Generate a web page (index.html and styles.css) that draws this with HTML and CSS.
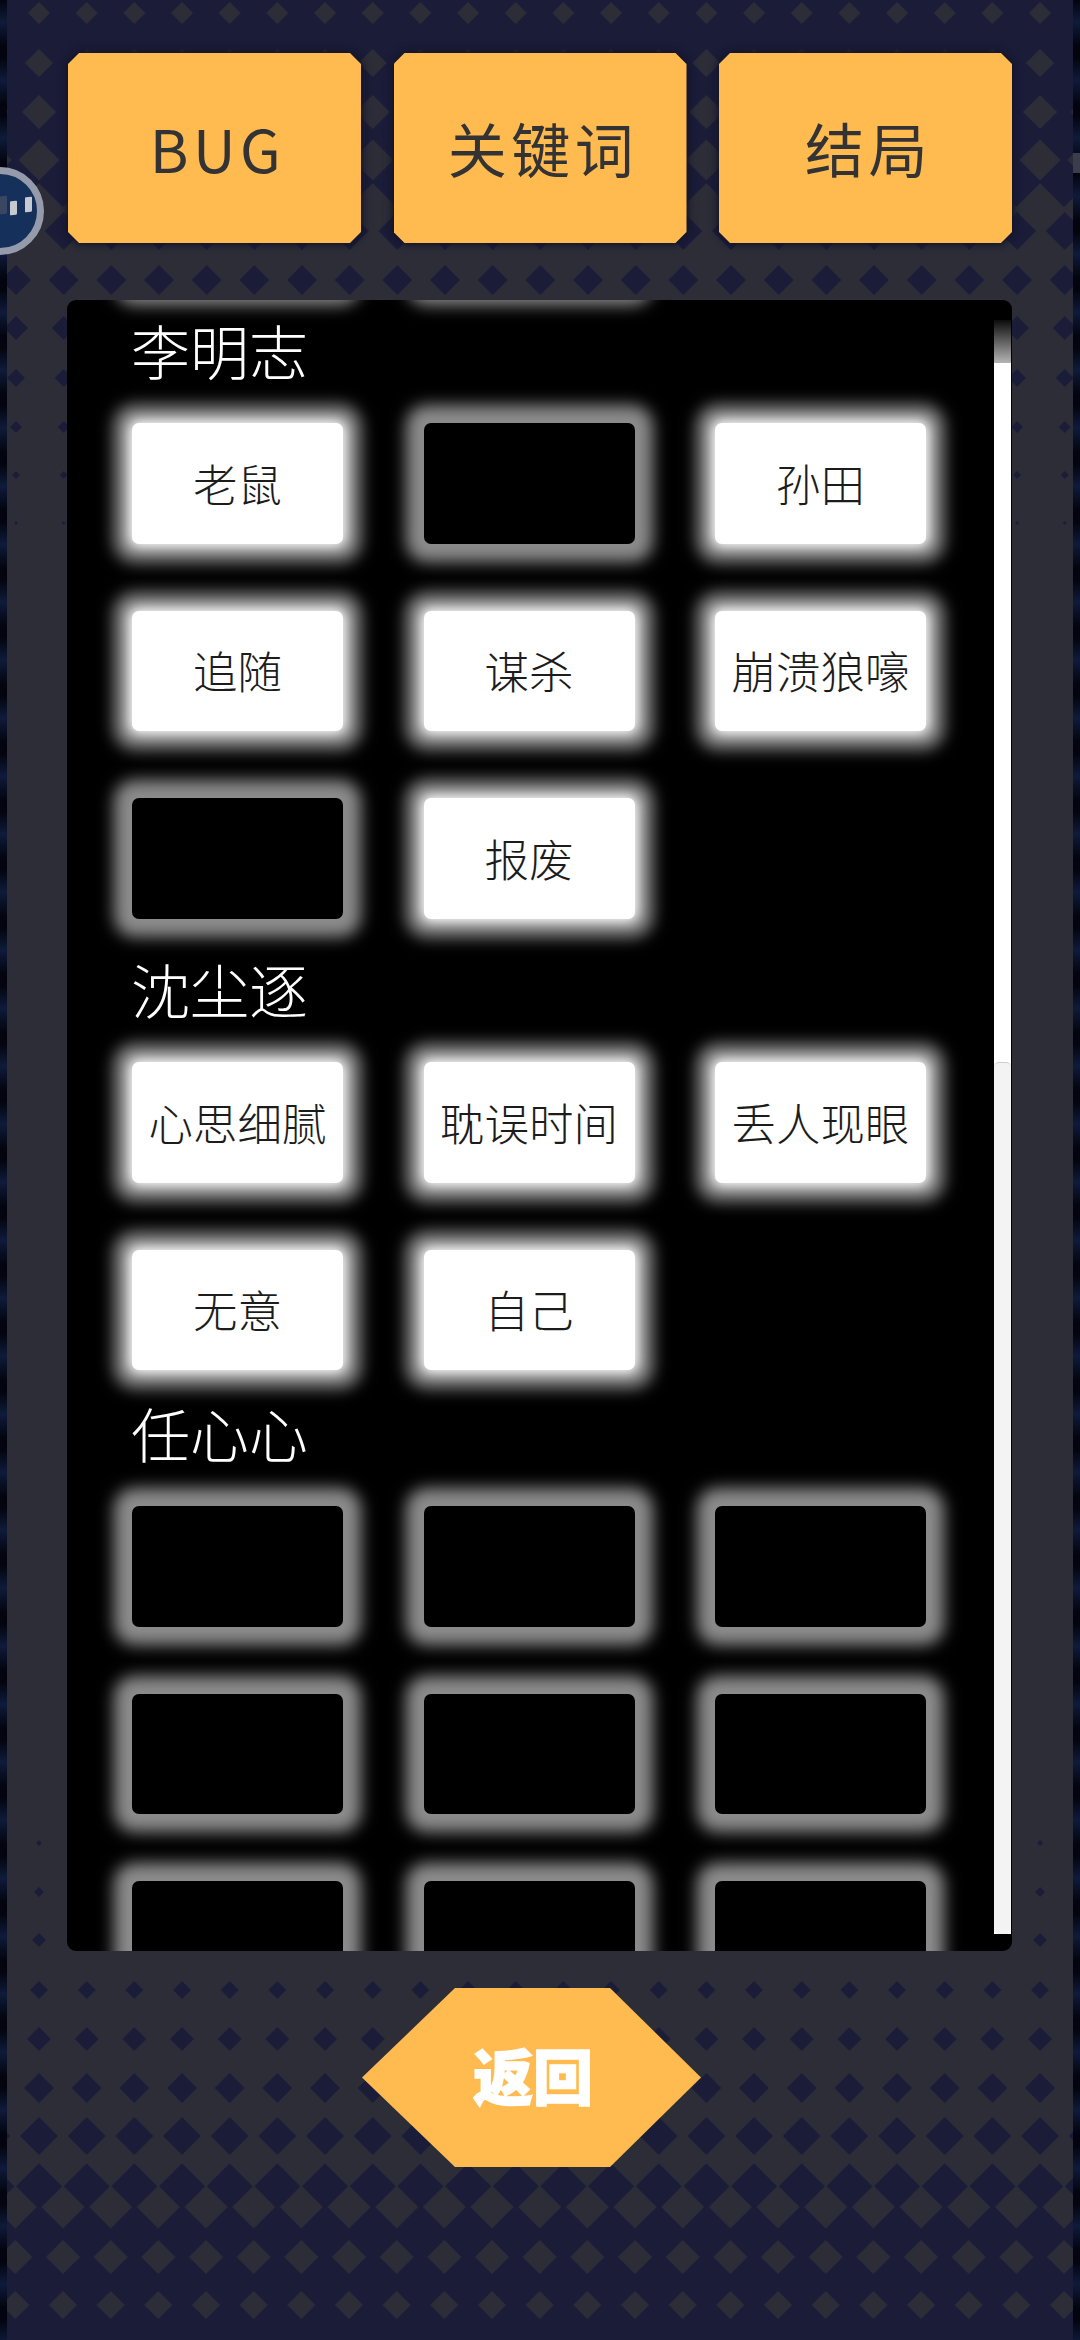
FILE: index.html

```html
<!DOCTYPE html>
<html>

<head>
<title>线索</title>
<meta charset="UTF-8">
<link rel="stylesheet" href="styles.css">
</head>

<body>
<div id="screen">

  <!-- diamond wallpaper, one pattern per row because the size changes row by row -->
  <svg id="wallpaper" width="1080" height="2340" viewBox="0 0 1080 2340">
    <defs>
      <pattern id="g1" patternUnits="userSpaceOnUse" width="47.67" height="60" x="15.17" y="-17"><path class="gray" d="M23.83 19l11 11-11 11-11-11z"/></pattern>
      <pattern id="g2" patternUnits="userSpaceOnUse" width="47.67" height="60" x="15.17" y="33"><path class="gray" d="M23.83 16l14 14-14 14-14-14z"/></pattern>
      <pattern id="g3" patternUnits="userSpaceOnUse" width="47.67" height="60" x="15.17" y="82"><path class="gray" d="M23.83 13l17 17-17 17-17-17z"/></pattern>
      <pattern id="g4" patternUnits="userSpaceOnUse" width="47.67" height="60" x="15.17" y="130"><path class="gray" d="M23.83 9.5l20.5 20.5-20.5 20.5-20.5-20.5z"/></pattern>
      <pattern id="g5" patternUnits="userSpaceOnUse" width="47.67" height="60" x="15.17" y="177"><path class="gray" d="M23.83 6.2l23.8 23.8-23.8 23.8-23.8-23.8z"/></pattern>

      <pattern id="n1" patternUnits="userSpaceOnUse" width="47.67" height="60" x="-7.83" y="201"><path class="navy" d="M23.83 11l19 19-19 19-19-19z"/></pattern>
      <pattern id="n2" patternUnits="userSpaceOnUse" width="47.67" height="60" x="-7.83" y="250"><path class="navy" d="M23.83 15l15 15-15 15-15-15z"/></pattern>
      <pattern id="n3" patternUnits="userSpaceOnUse" width="47.67" height="60" x="-7.83" y="298"><path class="navy" d="M23.83 18l12 12-12 12-12-12z"/></pattern>
      <pattern id="n4" patternUnits="userSpaceOnUse" width="47.67" height="60" x="-7.83" y="348"><path class="navy" d="M23.83 21l9 9-9 9-9-9z"/></pattern>
      <pattern id="n5" patternUnits="userSpaceOnUse" width="47.67" height="60" x="-7.83" y="397"><path class="navy" d="M23.83 24l6 6-6 6-6-6z"/></pattern>
      <pattern id="n6" patternUnits="userSpaceOnUse" width="47.67" height="60" x="-7.83" y="445"><path class="navy" d="M23.83 26l4 4-4 4-4-4z"/></pattern>
      <pattern id="n7" patternUnits="userSpaceOnUse" width="47.67" height="60" x="-7.83" y="493"><path class="navy" d="M23.83 28l2 2-2 2-2-2z"/></pattern>

      <pattern id="b1" patternUnits="userSpaceOnUse" width="47.67" height="60" x="15.17" y="1813"><path class="navy" d="M23.83 27l3 3-3 3-3-3z"/></pattern>
      <pattern id="b2" patternUnits="userSpaceOnUse" width="47.67" height="60" x="15.17" y="1862"><path class="navy" d="M23.83 25l5 5-5 5-5-5z"/></pattern>
      <pattern id="b3" patternUnits="userSpaceOnUse" width="47.67" height="60" x="15.17" y="1910"><path class="navy" d="M23.83 23l7 7-7 7-7-7z"/></pattern>
      <pattern id="b4" patternUnits="userSpaceOnUse" width="47.67" height="60" x="15.17" y="1960"><path class="navy" d="M23.83 21l9 9-9 9-9-9z"/></pattern>
      <pattern id="b5" patternUnits="userSpaceOnUse" width="47.67" height="60" x="15.17" y="2009"><path class="navy" d="M23.83 18l12 12-12 12-12-12z"/></pattern>
      <pattern id="b6" patternUnits="userSpaceOnUse" width="47.67" height="60" x="15.17" y="2058"><path class="navy" d="M23.83 15l15 15-15 15-15-15z"/></pattern>
      <pattern id="b7" patternUnits="userSpaceOnUse" width="47.67" height="60" x="15.17" y="2106"><path class="navy" d="M23.83 11l19 19-19 19-19-19z"/></pattern>
      <pattern id="b8" patternUnits="userSpaceOnUse" width="47.67" height="60" x="15.17" y="2157"><path class="navy" d="M23.83 6.2l23.8 23.8-23.8 23.8-23.8-23.8z"/></pattern>

      <pattern id="c1" patternUnits="userSpaceOnUse" width="47.67" height="60" x="39.17" y="2177"><path class="gray" d="M23.83 8.5l21.5 21.5-21.5 21.5-21.5-21.5z"/></pattern>
      <pattern id="c2" patternUnits="userSpaceOnUse" width="47.67" height="60" x="39.17" y="2227"><path class="gray" d="M23.83 13l17 17-17 17-17-17z"/></pattern>
      <pattern id="c3" patternUnits="userSpaceOnUse" width="47.67" height="60" x="39.17" y="2275"><path class="gray" d="M23.83 16l14 14-14 14-14-14z"/></pattern>
    </defs>

    <rect class="navy" x="0" y="0" width="1080" height="207"/>
    <rect class="navy" x="0" y="2187" width="1080" height="153"/>

    <rect fill="url(#g1)" x="0" y="-17" width="1080" height="60"/>
    <rect fill="url(#g2)" x="0" y="33" width="1080" height="60"/>
    <rect fill="url(#g3)" x="0" y="82" width="1080" height="60"/>
    <rect fill="url(#g4)" x="0" y="130" width="1080" height="60"/>
    <rect fill="url(#g5)" x="0" y="177" width="1080" height="60"/>
    <rect fill="url(#n1)" x="0" y="201" width="1080" height="60"/>
    <rect fill="url(#n2)" x="0" y="250" width="1080" height="60"/>
    <rect fill="url(#n3)" x="0" y="298" width="1080" height="60"/>
    <rect fill="url(#n4)" x="0" y="348" width="1080" height="60"/>
    <rect fill="url(#n5)" x="0" y="397" width="1080" height="60"/>
    <rect fill="url(#n6)" x="0" y="445" width="1080" height="60"/>
    <rect fill="url(#n7)" x="0" y="493" width="1080" height="60"/>

    <rect fill="url(#b1)" x="0" y="1813" width="1080" height="60"/>
    <rect fill="url(#b2)" x="0" y="1862" width="1080" height="60"/>
    <rect fill="url(#b3)" x="0" y="1910" width="1080" height="60"/>
    <rect fill="url(#b4)" x="0" y="1960" width="1080" height="60"/>
    <rect fill="url(#b5)" x="0" y="2009" width="1080" height="60"/>
    <rect fill="url(#b6)" x="0" y="2058" width="1080" height="60"/>
    <rect fill="url(#b7)" x="0" y="2106" width="1080" height="60"/>
    <rect fill="url(#b8)" x="0" y="2157" width="1080" height="60"/>
    <rect fill="url(#c1)" x="0" y="2177" width="1080" height="60"/>
    <rect fill="url(#c2)" x="0" y="2227" width="1080" height="60"/>
    <rect fill="url(#c3)" x="0" y="2275" width="1080" height="60"/>
  </svg>

  <!-- the app behind shows at both edges -->
  <div class="edge edge-left"></div>
  <div class="edge edge-right"><span class="edge-mark"></span></div>

  <div id="content">
    <div class="tabs">
      <div class="tab"><span class="tab-face">BUG</span></div>
      <div class="tab"><span class="tab-face">关键词</span></div>
      <div class="tab"><span class="tab-face">结局</span></div>
    </div>

    <div class="panel">
      <div class="list">
        <div class="cards">
          <div class="card blank"></div>
          <div class="card blank"></div>
        </div>

        <div class="name">李明志</div>
        <div class="cards">
          <div class="card">老鼠</div>
          <div class="card blank"></div>
          <div class="card">孙田</div>
          <div class="card">追随</div>
          <div class="card">谋杀</div>
          <div class="card">崩溃狼嚎</div>
          <div class="card blank"></div>
          <div class="card">报废</div>
        </div>

        <div class="name name-wide">沈尘逐</div>
        <div class="cards">
          <div class="card">心思细腻</div>
          <div class="card">耽误时间</div>
          <div class="card">丢人现眼</div>
          <div class="card">无意</div>
          <div class="card">自己</div>
        </div>

        <div class="name">任心心</div>
        <div class="cards">
          <div class="card blank"></div>
          <div class="card blank"></div>
          <div class="card blank"></div>
          <div class="card blank"></div>
          <div class="card blank"></div>
          <div class="card blank"></div>
          <div class="card blank"></div>
          <div class="card blank"></div>
          <div class="card blank"></div>
        </div>
      </div>

      <div class="scrollbar"><div class="thumb"></div></div>
    </div>

    <div class="back">返回</div>
  </div>

  <div class="ball">
    <span class="ball-bar bar-0"></span>
    <span class="ball-bar bar-1"></span>
    <span class="ball-bar bar-2"></span>
  </div>

</div>
</body>
</html>
```

FILE: styles.css

```css
html, body {
  margin: 0;
  padding: 0;
  background: #2d2d38;
  font-family: "Noto Sans CJK SC", "Noto Sans", sans-serif;
}

#screen {
  position: relative;
  width: 1080px;
  height: 2340px;
  overflow: hidden;
  background: #2d2d38;
}

#wallpaper {
  position: absolute;
  left: 0;
  top: 0;
}

.gray { fill: #2d2d38; }
.navy { fill: #1a1c38; }

.edge {
  position: absolute;
  top: 0;
  bottom: 0;
  width: 7px;
  background-color: #03040f;
  background-image: repeating-linear-gradient(180deg, #03040f 0, #0f1b3a 22px, #03040f 46px, #03040f 58px);
}
.edge-left { left: 0; }
.edge-right { right: 0; }

.edge-mark {
  position: absolute;
  left: 0;
  top: 153px;
  width: 7px;
  height: 20px;
  background: #3b3c4c;
}

#content {
  position: relative;
  padding-top: 53px;
}

/* top buttons */
.tabs {
  display: flex;
  gap: 32.5px;
  margin-left: 68px;
}

.tab {
  width: 293px;
  height: 190px;
  filter: drop-shadow(0 0 3px #14152a) drop-shadow(0 0 3px #14152a);
}

.tab-face {
  display: flex;
  align-items: center;
  justify-content: center;
  height: 100%;
  padding: 0 0 2px 6px;
  box-sizing: border-box;
  background: #ffbb50;
  color: #333335;
  font-size: 59px;
  letter-spacing: 4.5px;
  clip-path: polygon(11px 0, calc(100% - 11px) 0, 100% 11px, 100% calc(100% - 11px), calc(100% - 11px) 100%, 11px 100%, 0 calc(100% - 11px), 0 11px);
}

/* keyword panel */
.panel {
  position: relative;
  width: 945px;
  height: 1651px;
  margin: 57px 0 0 67px;
  background: #000;
  border-radius: 9px;
  overflow: hidden;
}

.list {
  margin-top: -133.5px;
  padding-left: 65px;
}

.cards {
  display: grid;
  grid-template-columns: repeat(3, 211px);
  grid-auto-rows: 120.5px;
  column-gap: 80.5px;
  row-gap: 67px;
}

.card {
  display: flex;
  align-items: center;
  justify-content: center;
  padding-bottom: 2px;
  box-sizing: border-box;
  background: #fff;
  border-radius: 7px;
  color: #1c1c1c;
  font-size: 44.5px;
  font-weight: 200;
  white-space: nowrap;
  box-shadow: 0 0 12px 3px #fff, 0 0 16px 18px rgba(255, 255, 255, 0.55);
}

.card.blank {
  background: #000;
  box-shadow: 0 0 16px 18px rgba(255, 255, 255, 0.55);
}

.name {
  height: 58px;
  margin: 34px 0 44px -1px;
  color: #fff;
  font-size: 59px;
  font-weight: 200;
  line-height: 58px;
}

.name-wide {
  margin-top: 41.5px;
}

.scrollbar {
  position: absolute;
  right: 1px;
  top: 20px;
  bottom: 17px;
  width: 17px;
  background: linear-gradient(180deg, #0c0c0c 0, #b4b4b4 43px, #fff 43px);
}

.thumb {
  position: absolute;
  left: 0;
  right: 0;
  top: 742px;
  bottom: 0;
  box-sizing: border-box;
  background: #f3f3f3;
  border-top: 1px solid #cfcfcf;
  border-radius: 5px;
}

/* back button */
.back {
  display: flex;
  align-items: center;
  justify-content: center;
  box-sizing: border-box;
  width: 339px;
  height: 179px;
  padding: 0 0 8px 3px;
  margin: 37px 0 0 362px;
  background: #ffbb50;
  color: #fff;
  font-size: 60px;
  font-weight: 900;
  -webkit-text-stroke: 1.5px #fff;
  clip-path: polygon(93px 0, 248px 0, 100% 50%, 248px 100%, 93px 100%, 0 50%);
}

/* floating ball at the left edge */
.ball {
  position: absolute;
  left: -44px;
  top: 167px;
  box-sizing: border-box;
  width: 88px;
  height: 88px;
  border: 7px solid #969bab;
  border-radius: 50%;
  background: #16305c;
}

.ball-bar {
  position: absolute;
  width: 7px;
  height: 14px;
  background: #c6c9d0;
  border-radius: 1px;
  transform: skewY(-8deg);
}
.bar-0 { left: 37px; top: 22px; width: 7px; height: 18px; background: #3a4763; }
.bar-1 { left: 47px; top: 27px; }
.bar-2 { left: 62px; top: 23px; height: 15px; }
```
